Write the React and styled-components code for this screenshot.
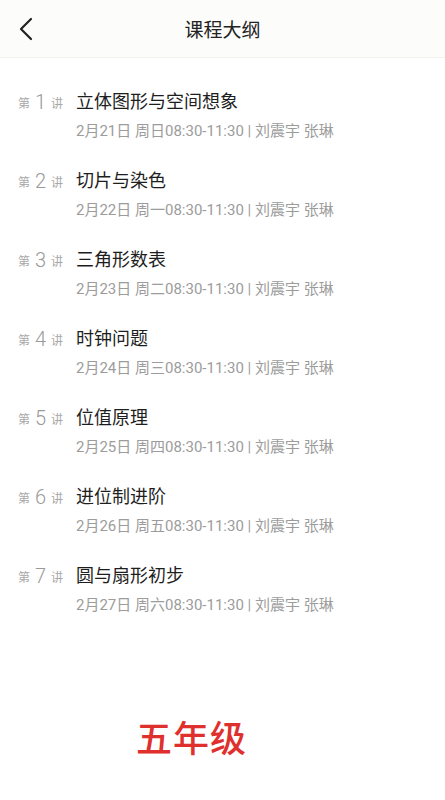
import React from "react";
import styled, { createGlobalStyle } from "styled-components";

const Global = createGlobalStyle`
  html, body { margin: 0; padding: 0; background: #ffffff; }
  body { font-family: "Roboto", "Noto Sans CJK SC", "Noto Sans", sans-serif; }
`;

const Page = styled.div`
  width: 445px;
  height: 800px;
  background: #ffffff;
  display: flex;
  flex-direction: column;
  overflow: hidden;
`;

const Header = styled.header`
  height: 57px;
  flex: none;
  background: #fcfcfa;
  border-bottom: 1px solid #f0f0ec;
  display: grid;
  grid-template-columns: 60px 1fr 60px;
  align-items: center;
`;

const Back = styled.div`
  display: flex;
  align-items: center;
  padding-left: 17px;
  height: 100%;
`;

const Title = styled.h1`
  margin: 0;
  text-align: center;
  font-size: 19px;
  font-weight: 400;
  color: #222;
`;

const List = styled.ul`
  list-style: none;
  margin: 0;
  padding: 31px 0 0 0;
  display: flex;
  flex-direction: column;
`;

const Row = styled.li`
  height: 79px;
  display: grid;
  grid-template-columns: 76px 1fr;
  grid-template-rows: 26px 20px;
  row-gap: 6px;
  align-content: start;
`;

const Index = styled.div`
  display: flex;
  align-items: center;
  padding-left: 18px;
  color: #a8a8a8;
  gap: 5px;
`;

const Small = styled.span`
  font-size: 12px;
`;

const Num = styled.span`
  font-family: "Roboto", "Noto Sans", sans-serif;
  font-weight: 300;
  font-size: 20px;
  line-height: 26px;
  color: #9a9a9a;
`;

const LessonName = styled.div`
  font-size: 18px;
  line-height: 26px;
  color: #1e1e1e;
`;

const Meta = styled.div`
  grid-column: 2;
  font-size: 15px;
  line-height: 20px;
  color: #9c9c9c;
  white-space: nowrap;
`;

const Grade = styled.div`
  margin-top: auto;
  margin-bottom: 38px;
  padding-left: 136px;
  font-size: 36px;
  font-weight: 500;
  color: #e0302e;
  letter-spacing: 1px;
`;

const lessons = [
  ["立体图形与空间想象", "2月21日 周日08:30-11:30 | 刘震宇 张琳"],
  ["切片与染色", "2月22日 周一08:30-11:30 | 刘震宇 张琳"],
  ["三角形数表", "2月23日 周二08:30-11:30 | 刘震宇 张琳"],
  ["时钟问题", "2月24日 周三08:30-11:30 | 刘震宇 张琳"],
  ["位值原理", "2月25日 周四08:30-11:30 | 刘震宇 张琳"],
  ["进位制进阶", "2月26日 周五08:30-11:30 | 刘震宇 张琳"],
  ["圆与扇形初步", "2月27日 周六08:30-11:30 | 刘震宇 张琳"],
];

export default function App() {
  return (
    <Page>
      <Global />
      <Header>
        <Back>
          <svg width="18" height="24" viewBox="0 0 18 24" fill="none">
            <path d="M14 2 L4 12 L14 22" stroke="#222" strokeWidth="2.2" strokeLinecap="round" strokeLinejoin="round" />
          </svg>
        </Back>
        <Title>课程大纲</Title>
        <div />
      </Header>
      <List>
        {lessons.map(([name, meta], i) => (
          <Row key={i}>
            <Index>
              <Small>第</Small>
              <Num>{i + 1}</Num>
              <Small>讲</Small>
            </Index>
            <LessonName>{name}</LessonName>
            <Meta>{meta}</Meta>
          </Row>
        ))}
      </List>
      <Grade>五年级</Grade>
    </Page>
  );
}
